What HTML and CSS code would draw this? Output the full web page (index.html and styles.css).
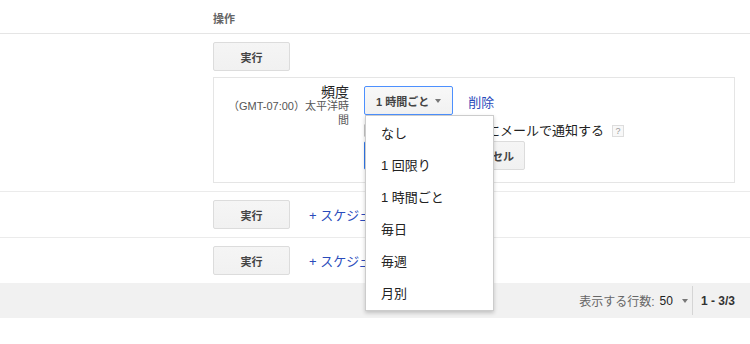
FILE: index.html
```html
<!DOCTYPE html>
<html lang="ja">
<head>
    <meta charset="UTF-8">
    <meta name="viewport" content="width=device-width, initial-scale=1.0">
    <title>スクリプト</title>
    <link rel="stylesheet" href="styles.css">
</head>
<body>
    <div class="grid">
        <div class="head"><span>操作</span></div>

        <div class="row">
            <button class="btn btn-run">実行</button>
            <div class="sched">
                <div class="sched-label">
                    <div class="freq">頻度</div>
                    <div class="tz">（GMT-07:00）太平洋時間</div>
                </div>
                <div class="sched-body">
                    <div class="sched-top">
                        <div class="select-wrap">
                            <div class="select">1 時間ごと<span class="caret"></span></div>
                            <ul class="menu">
                                <li>なし</li>
                                <li>1 回限り</li>
                                <li>1 時間ごと</li>
                                <li>毎日</li>
                                <li>毎週</li>
                                <li>月別</li>
                            </ul>
                        </div>
                        <a class="link del" href="#">削除</a>
                    </div>
                    <label class="notify">
                        <span class="check"></span>
                        <span>実行が失敗した時にメールで通知する</span>
                        <span class="help">?</span>
                    </label>
                    <div class="actions">
                        <button class="btn btn-primary">保存</button>
                        <button class="btn btn-cancel">キャンセル</button>
                    </div>
                </div>
            </div>
        </div>

        <div class="row row-flat">
            <button class="btn btn-run">実行</button>
            <a class="link add" href="#">+ スケジュールを追加</a>
        </div>

        <div class="row row-flat row-last">
            <button class="btn btn-run">実行</button>
            <a class="link add" href="#">+ スケジュールを追加</a>
        </div>

        <div class="footer">
            <span class="rows-label">表示する行数:</span>
            <span class="rows-num">50</span>
            <span class="caret caret-footer"></span>
            <span class="sep"></span>
            <span class="range">1 - 3/3</span>
        </div>
    </div>
</body>
</html>
```

FILE: styles.css
```css
body {
    margin: 0;
    font-family: "Liberation Sans", Arial, "Noto Sans CJK JP", sans-serif;
    font-size: 13px;
    color: #222;
}
.head {
    height: 30px;
    padding: 3px 0 0 213px;
    border-bottom: 1px solid #e5e5e5;
    display: flex;
    align-items: center;
    font-size: 11px;
    font-weight: bold;
    color: #666;
}
.row {
    padding: 8px 0 8px 213px;
    border-bottom: 1px solid #ebebeb;
}
.row-flat {
    display: flex;
    align-items: center;
}
.row-last {
    border-bottom: none;
}
.btn {
    height: 29px;
    box-sizing: border-box;
    padding: 0 10px;
    border: 1px solid #dcdcdc;
    border-radius: 2px;
    background: linear-gradient(#f5f5f5, #f1f1f1);
    font-family: inherit;
    font-size: 11px;
    font-weight: bold;
    color: #444;
    cursor: pointer;
}
.btn-run {
    width: 77px;
    display: block;
}
.btn-primary {
    min-width: 77px;
    border-color: #3079ed;
    background: linear-gradient(#4d90fe, #4787ed);
    color: #fff;
}
.btn-cancel {
    min-width: 77px;
    margin-left: 7px;
}
.link {
    color: #2a4bbb;
    text-decoration: none;
}
.add {
    margin-left: 19px;
    font-size: 13px;
}
.sched {
    margin-top: 6px;
    width: 522px;
    box-sizing: border-box;
    border: 1px solid #e5e5e5;
    padding: 8px 0 12px;
    display: flex;
}
.sched-label {
    width: 135px;
    box-sizing: border-box;
    padding-left: 10px;
    text-align: right;
}
.freq {
    font-size: 14px;
    line-height: 14px;
    margin-top: -1px;
    color: #222;
}
.tz {
    font-size: 11px;
    line-height: 14px;
    color: #555;
}
.sched-body {
    margin-left: 15px;
}
.sched-top {
    display: flex;
    align-items: flex-start;
}
.select-wrap {
    position: relative;
}
.select {
    height: 29px;
    box-sizing: border-box;
    padding: 0 11px 0 11px;
    border: 1px solid #4d90fe;
    border-radius: 2px;
    background: linear-gradient(#f8f8f8, #f1f1f1);
    display: flex;
    align-items: center;
    font-size: 11px;
    font-weight: bold;
    color: #444;
}
.caret {
    display: inline-block;
    width: 0;
    height: 0;
    margin-left: 6px;
    border-top: 4px solid #777;
    border-left: 3.5px solid transparent;
    border-right: 3.5px solid transparent;
}
.menu {
    position: absolute;
    top: 29px;
    left: 1px;
    z-index: 10;
    width: 129px;
    box-sizing: border-box;
    margin: 0;
    padding: 2px 0 0;
    list-style: none;
    background: #fff;
    border: 1px solid rgba(0, 0, 0, 0.2);
    box-shadow: 0 2px 4px rgba(0, 0, 0, 0.2);
}
.menu li {
    padding: 6px 15px;
    line-height: 20px;
    font-size: 13px;
    color: #222;
}
.del {
    margin: 8px 0 0 15px;
    line-height: 17px;
    font-size: 13px;
}
.notify {
    margin-top: 9px;
    height: 13px;
    display: flex;
    align-items: center;
    line-height: 13px;
    font-size: 13px;
    color: #222;
}
.check {
    width: 13px;
    height: 13px;
    box-sizing: border-box;
    border: 1px solid #c6c6c6;
    border-radius: 1px;
    background: #fff;
    margin-right: 6px;
}
.help {
    width: 12px;
    height: 12px;
    box-sizing: border-box;
    margin-left: 8px;
    border: 1px solid #ddd;
    background: #f8f8f8;
    font-size: 9px;
    line-height: 10px;
    text-align: center;
    color: #999;
}
.actions {
    margin-top: 4px;
    display: flex;
}
.footer {
    height: 35px;
    background: #f1f1f1;
    display: flex;
    justify-content: flex-end;
    align-items: center;
    padding-right: 15px;
    font-size: 12px;
    color: #666;
}
.rows-num {
    margin-left: 5px;
    color: #222;
}
.caret-footer {
    margin-left: 9px;
}
.sep {
    width: 1px;
    height: 29px;
    margin: 0 8px 0 4px;
    background: #d5d5d5;
}
.range {
    font-weight: bold;
    font-size: 12px;
    color: #333;
}
```
